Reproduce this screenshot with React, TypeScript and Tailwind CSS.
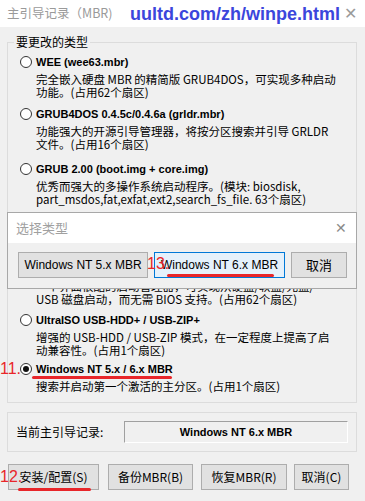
import React from "react";

const FONT = "font-['Liberation_Sans','Noto_Sans_CJK_SC',sans-serif]";
const DESC_FONT = "font-['Noto_Sans_CJK_SC','Liberation_Sans',sans-serif]";

const Radio = ({ checked }: { checked?: boolean }) => (
  <span className="flex h-[12px] w-[12px] shrink-0 items-center justify-center rounded-full border border-[#333333] bg-white">
    {checked && <span className="h-[6px] w-[6px] rounded-full bg-[#111111]" />}
  </span>
);

type OptionProps = {
  title: string;
  lines: string[];
  className?: string;
  checked?: boolean;
};

const Option = ({ title, lines, className, checked }: OptionProps) => (
  <div className={className}>
    <div className="flex h-[16px] items-center gap-[4px] pl-[12px]">
      <Radio checked={checked} />
      <span className="text-[11px] font-bold leading-[16px] text-black">{title}</span>
    </div>
    <div className={"mt-[3px] pl-[28px] text-[11.5px] leading-[13px] text-black " + DESC_FONT}>
      {lines.map((l) => (
        <div key={l} className="whitespace-nowrap">{l}</div>
      ))}
    </div>
  </div>
);

const Btn = ({ children, className }: { children: React.ReactNode; className?: string }) => (
  <div
    className={
      "flex h-[26px] items-center justify-center border border-[#adadad] bg-[#e1e1e1] text-[12px] text-black " +
      (className ?? "")
    }
  >
    {children}
  </div>
);

export default function App() {
  return (
    <div className={"relative h-[501px] w-[365px] overflow-hidden bg-[#f0f0f0] " + FONT}>
      {/* title bar */}
      <div className="flex h-[27px] items-center bg-white pl-[7px] pr-[8px]">
        <span className={"whitespace-nowrap text-[12.5px] text-[#9a9a9a] " + DESC_FONT}>主引导记录（MBR)</span>
        <span className="ml-auto shrink-0 whitespace-nowrap text-[18px] font-bold leading-none text-[#3b46dc]">uultd.com/zh/winpe.html</span>
        <span className="ml-[4px] shrink-0 text-[16px] leading-none text-[#9a9a9a]">✕</span>
      </div>

      <div className="px-[7px] pt-[7px]">
        <fieldset className="w-[350px] border border-[#dcdcdc] pb-[9px]">
          <legend className={"ml-[6px] px-[2px] text-[12px] leading-[16px] text-black " + DESC_FONT}>要更改的类型</legend>
          <Option
            className="mt-[4px]"
            title="WEE (wee63.mbr)"
            lines={["完全嵌入硬盘 MBR 的精简版 GRUB4DOS，可实现多种启动", "功能。(占用62个扇区)"]}
          />
          <Option
            className="mt-[7px]"
            title="GRUB4DOS 0.4.5c/0.4.6a (grldr.mbr)"
            lines={["功能强大的开源引导管理器，将按分区搜索并引导 GRLDR", "文件。(占用16个扇区)"]}
          />
          <Option
            className="mt-[10px]"
            title="GRUB 2.00 (boot.img + core.img)"
            lines={["优秀而强大的多操作系统启动程序。(模块: biosdisk,", "part_msdos,fat,exfat,ext2,search_fs_file. 63个扇区)"]}
          />
          <Option
            className="mt-[55px]"
            title="PLoP Boot Manager"
            lines={["一个界面很酷的启动管理器，可实现从硬盘/软盘/光盘/", "USB 磁盘启动，而无需 BIOS 支持。(占用62个扇区)"]}
          />
          <Option
            className="mt-[6px]"
            title="UltraISO USB-HDD+ / USB-ZIP+"
            lines={["增强的 USB-HDD / USB-ZIP 模式，在一定程度上提高了启", "动兼容性。(占用1个扇区)"]}
          />
          <Option
            className="mt-[4px]"
            checked
            title="Windows NT 5.x / 6.x MBR"
            lines={["搜索并启动第一个激活的主分区。(占用1个扇区)"]}
          />
        </fieldset>

        <div className="mt-[9px] flex h-[40px] w-[350px] items-center border border-[#dcdcdc] pl-[8px] pr-[8px]">
          <span className={"text-[12px] text-black " + DESC_FONT}>当前主引导记录:</span>
          <div className="ml-auto flex h-[22px] w-[224px] items-center justify-center border border-b-white border-l-[#a0a0a0] border-r-white border-t-[#a0a0a0] text-[11px] font-bold text-black">
            Windows NT 6.x MBR
          </div>
        </div>

        <div className={"mt-[12px] flex pl-[1px] " + DESC_FONT}>
          <Btn className="w-[91px]">安装/配置(S)</Btn>
          <Btn className="ml-[9px] w-[85px]">备份MBR(B)</Btn>
          <Btn className="ml-[8px] w-[86px]">恢复MBR(R)</Btn>
          <Btn className="ml-[7px] w-[55px]">取消(C)</Btn>
        </div>
      </div>

      {/* dialog over the list */}
      <div className="absolute left-[7px] top-[212px] flex h-[77px] w-[350px] flex-col border border-[#a8a8a8] bg-[#f0f0f0]">
        <div className="flex h-[30px] items-center bg-white pl-[8px] pr-[9px]">
          <span className={"text-[13px] text-[#a0a0a0] " + DESC_FONT}>选择类型</span>
          <span className="ml-auto text-[14px] leading-none text-[#8a8a8a]">✕</span>
        </div>
        <div className="mt-[9px] flex pl-[10px]">
          <Btn className="w-[130px]">Windows NT 5.x MBR</Btn>
          <Btn className="ml-[6px] w-[131px] !border-[#0078d7] !bg-[#e5f1fb]">Windows NT 6.x MBR</Btn>
          <Btn className={"ml-[6px] w-[56px] text-[13px] " + DESC_FONT}>取消</Btn>
        </div>
      </div>

      {/* red annotations */}
      <span className="absolute left-[147px] top-[256px] text-[16px] leading-none text-[#e8262a]">13.</span>
      <span className="absolute left-[167px] top-[274px] h-[3px] w-[107px] rounded-full bg-[#e8262a]" />
      <span className="absolute left-[0px] top-[361px] text-[16px] leading-none text-[#e8262a]">11.</span>
      <span className="absolute left-[32px] top-[376px] h-[3px] w-[140px] rounded-full bg-[#e8262a]" />
      <span className="absolute left-[0px] top-[469px] text-[16px] leading-none text-[#e8262a]">12.</span>
      <span className="absolute left-[18px] top-[488px] h-[3px] w-[73px] rounded-full bg-[#e8262a]" />
    </div>
  );
}
